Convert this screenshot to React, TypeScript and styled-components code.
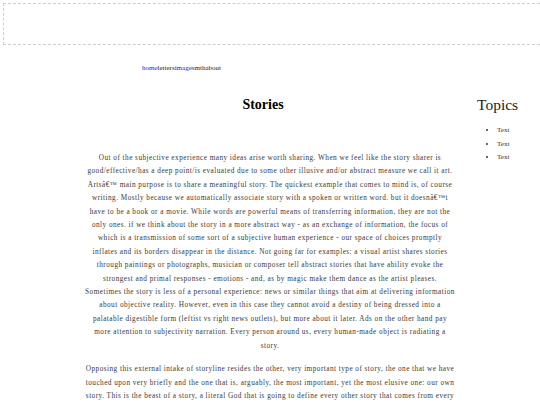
import { createGlobalStyle } from "styled-components";
import styled from "styled-components";

const GlobalStyle = createGlobalStyle`
    html, body {
        margin: 0;
        padding: 0;
        overflow-x: hidden;
        background: #ffffff;
        font-family: "Liberation Serif", "Times New Roman", serif;
    }
`;

const navItems = [
    { label: "home", link: true },
    { label: "letters", link: false },
    { label: "images", link: true },
    { label: "mth", link: false },
    { label: "about", link: false },
];

const topics = ["Text", "Text", "Text"];

// line breaks as they fall on the original page
const firstStory = [
    "Out of the subjective experience many ideas arise worth sharing. When we feel like the story sharer is",
    "good/effective/has a deep point/is evaluated due to some other illusive and/or abstract measure we call it art.",
    "Artsâ€™ main purpose is to share a meaningful story. The quickest example that comes to mind is, of course",
    "writing. Mostly because we automatically associate story with a spoken or written word. but it doesnâ€™t",
    "have to be a book or a movie. While words are powerful means of transferring information, they are not the",
    "only ones. if we think about the story in a more abstract way - as an exchange of information, the focus of",
    "which is a transmission of some sort of a subjective human experience - our space of choices promptly",
    "inflates and its borders disappear in the distance. Not going far for examples: a visual artist shares stories",
    "through paintings or photographs, musician or composer tell abstract stories that have ability evoke the",
    "strongest and primal responses - emotions - and, as by magic make them dance as the artist pleases.",
    "Sometimes the story is less of a personal experience: news or similar things that aim at delivering information",
    "about objective reality. However, even in this case they cannot avoid a destiny of being dressed into a",
    "palatable digestible form (leftist vs right news outlets), but more about it later. Ads on the other hand pay",
    "more attention to subjectivity narration. Every person around us, every human-made object is radiating a",
    "story.",
];

const secondStory = [
    "Opposing this external intake of storyline resides the other, very important type of story, the one that we have",
    "touched upon very briefly and the one that is, arguably, the most important, yet the most elusive one: our own",
    "story. This is the beast of a story, a literal God that is going to define every other story that comes from every",
    "direction, the lens through which we look at everything else and the voice that narrates our days.",
];

function App() {
    return (
        <>
            <GlobalStyle />
            <Banner />
            <Nav>
                {navItems.map(item => (
                    <NavLink key={item.label} $active={item.link}>{item.label}</NavLink>
                ))}
            </Nav>
            <Layout>
                <Main>
                    <Title>Stories</Title>
                    <Paragraph>
                        {firstStory.map((line, i) => <Line key={i}>{line}</Line>)}
                    </Paragraph>
                    <Paragraph>
                        {secondStory.map((line, i) => <Line key={i}>{line}</Line>)}
                    </Paragraph>
                </Main>
                <Aside>
                    <SideTitle>Topics</SideTitle>
                    <TopicList>
                        {topics.map((t, i) => (
                            <li key={i}>{t}</li>
                        ))}
                    </TopicList>
                </Aside>
            </Layout>
        </>
    );
}

const Banner = styled.header`
    margin: 3px 0 0 3px;
    width: calc(100% - 3px);
    height: 42px;
    border: 1px dashed #cfcfcf;
    border-right: none;
    box-sizing: border-box;
`;

const Nav = styled.nav`
    padding-left: 142px;
    margin-top: 18px;
    font-size: 7px;
    line-height: 10px;
    display: flex;
`;

const NavLink = styled.span<{ $active: boolean }>`
    color: ${props => props.$active ? "#2020e0" : "#222222"};
    text-decoration: none;
`;

const Layout = styled.div`
    display: grid;
    grid-template-columns: 372px 1fr;
    column-gap: 21px;
    margin-left: 84px;
    margin-top: 23px;
`;

const Main = styled.main`
    color: #3a3a3a;
`;

const Title = styled.h1`
    font-size: 14px;
    font-weight: bold;
    text-align: center;
    color: #000000;
    margin: 0 0 38px;
    padding-right: 14px;
    line-height: 18px;
`;

const Paragraph = styled.p`
    font-size: 7.25px;
    letter-spacing: 0.46px;
    line-height: 13.4px;
    text-align: center;
    margin: 0 0 10px;
`;

const Line = styled.span`
    display: block;
    white-space: nowrap;
`;

const Aside = styled.aside`
    color: #222222;
`;

const SideTitle = styled.h1`
    font-size: 15.5px;
    font-weight: normal;
    margin: 0 0 10px;
    line-height: 18px;
`;

const TopicList = styled.ul`
    margin: 0;
    padding-left: 20px;
    font-size: 7px;
    line-height: 13.5px;
    color: #333333;
`;

export default App;
